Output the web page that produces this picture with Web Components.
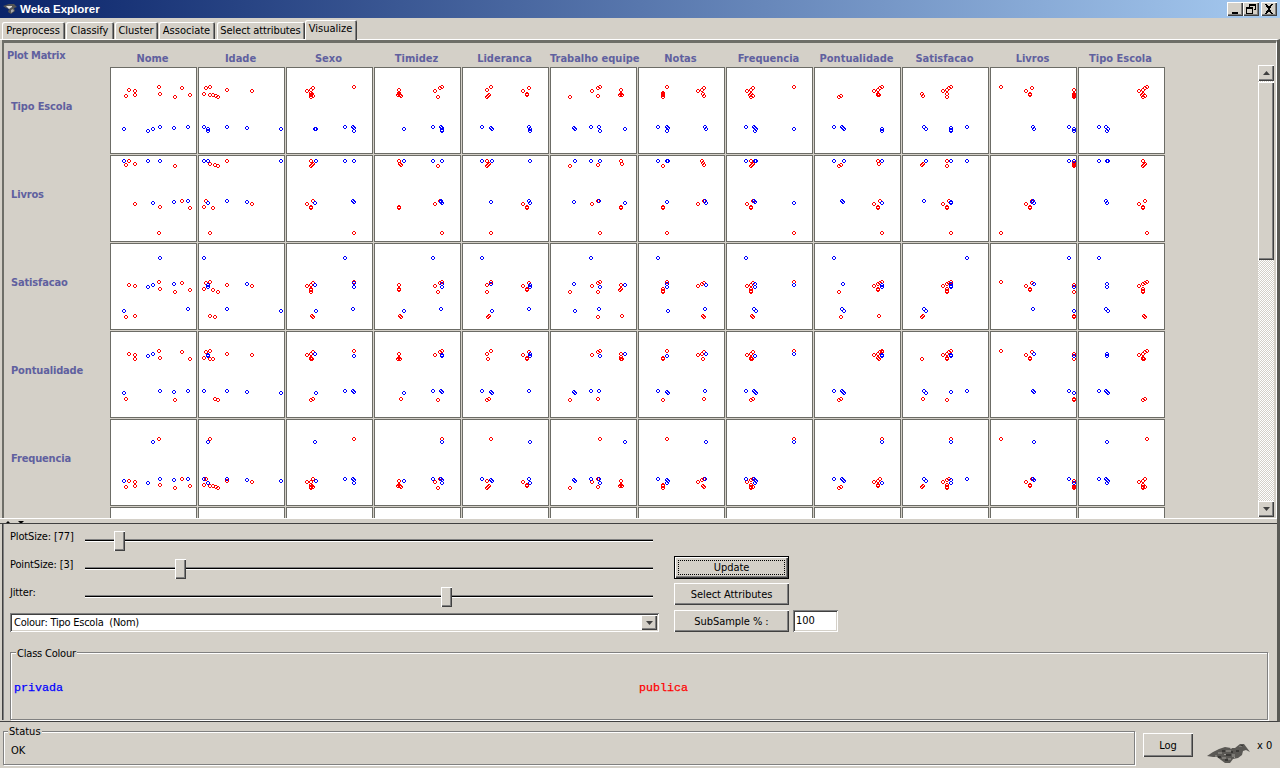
<!DOCTYPE html>
<html><head><meta charset="utf-8"><title>Weka Explorer</title>
<style>
html,body{margin:0;padding:0;background:#d4d0c8;overflow:hidden}
body{width:1280px;height:768px;font:11px "DejaVu Sans Condensed","Liberation Sans",Arial,sans-serif;color:#000}
</style></head>
<body>
<weka-explorer></weka-explorer>
<script>
const RAISED='box-shadow:inset 1px 1px 0 #fff,inset -1px -1px 0 #404040,inset -2px -2px 0 #808080;';
const SUNKEN='box-shadow:inset 1px 1px 0 #808080,inset -1px -1px 0 #fff,inset 2px 2px 0 #404040,inset -2px -2px 0 #d4d0c8;';
function def(name,css,html,init){
  customElements.define(name,class extends HTMLElement{
    constructor(){super();const r=this.attachShadow({mode:'open'});
      r.innerHTML='<style>'+css+'</style>'+(typeof html==='function'?html(this):html);}
    connectedCallback(){if(init&&!this._i){this._i=1;init(this,this.shadowRoot);}}
  });
}
const DATA=`0 0|62,78 80,81 80,93 53,96 151,69 154,90 198,99 219,72 243,93|47,195 118,201 133,195 154,189 195,192 237,189
0 1|290,72 302,69 284,90 302,93 311,93 318,96 325,99 352,78 426,81|284,189 296,195 296,201 352,189 411,192 512,195
0 2|606,72 600,78 589,81 600,87 603,90 600,93 606,96 600,99 728,69|612,195 615,195 701,189 725,189 728,192 728,201
0 3|861,78 861,87 858,93 864,93 867,96 861,90 965,81 982,72 988,69 976,99|876,195 961,189 985,189 988,192 988,198 988,201
0 4|1121,78 1133,69 1127,93 1124,96 1121,99 1225,81 1243,72 1237,90 1237,93|1106,189 1133,192 1136,195 1245,189 1248,195 1248,201
0 5|1364,99 1429,81 1447,96 1447,72 1453,69 1515,78 1515,90 1518,93 1513,93|1376,192 1379,195 1426,189 1450,189 1453,201 1526,195
1 0|62,291 53,303 80,300 198,306 80,420 154,429 219,411 243,432 151,507|47,291 118,291 154,291 133,417 195,414 237,411
1 1|302,300 317,303 325,306 352,291 290,411 284,429 311,432 426,420 302,507|284,291 296,291 512,291 296,417 352,411 411,414
1 2|600,291 606,300 603,303 600,306 606,411 589,420 600,429 600,432 728,507|615,291 701,291 728,291 612,417 725,411 728,414
1 3|861,291 864,300 867,303 861,432 861,429 976,306 965,420 982,411 988,507|876,291 961,291 988,291 985,411 988,417 985,413
1 4|1121,291 1127,300 1124,303 1121,306 1225,420 1237,429 1237,432 1243,411 1133,507|1106,291 1136,291 1248,291 1133,414 1245,411 1248,417
1 5|1515,291 1518,300 1364,306 1447,303 1429,420 1447,411 1515,429 1515,432 1453,507|1379,291 1426,291 1453,291 1376,414 1450,411 1526,417
2 0|62,663 80,666 151,654 154,675 198,684 219,657 243,678 53,759 80,756|154,582 118,669 133,663 195,660 47,741 237,735
2 1|290,657 302,654 284,675 311,678 325,684 352,663 426,666 302,756 317,759|284,582 296,663 296,669 411,660 352,735 512,741
2 2|606,657 600,663 589,666 600,675 600,678 600,684 728,654 603,756 606,759|701,582 612,663 728,657 728,669 615,741 725,735
2 3|861,663 861,675 861,678 965,666 982,657 988,654 976,684 864,756 867,759|961,582 988,660 988,669 876,741 985,735
2 4|1121,663 1133,654 1121,684 1225,666 1243,657 1237,675 1237,678 1124,759 1127,756|1106,582 1133,660 1248,663 1248,669 1136,741 1245,735
2 5|1429,666 1447,657 1453,654 1447,684 1364,684 1515,663 1515,675 1513,678 1518,756 1447,759|1426,582 1376,660 1453,669 1526,663 1379,741 1450,735
0 6|92,69 80,87 80,90 80,93 80,99 183,81 195,78 201,72 198,90 201,96|65,189 92,189 95,192 92,201 204,189 207,195
0 7|346,72 340,78 328,81 340,90 340,99 346,96 337,93 467,69|325,189 349,189 352,192 355,195 352,201 467,195
0 8|606,96 600,99 704,81 716,78 722,72 728,69 716,90 719,93 716,93|586,189 609,189 612,192 615,195 728,195 728,201
0 9|846,90 849,96 908,81 920,78 926,72 932,69 920,90 920,99|852,189 858,195 932,192 932,198 932,201 979,189
0 10|1077,69 1151,81 1169,72 1163,90 1163,93 1293,78 1293,90 1293,93 1293,96 1293,99|1172,189 1175,195 1278,189 1293,195 1293,201
0 11|1509,69 1503,72 1497,78 1485,81 1497,90 1497,99 1503,96 1494,93|1367,189 1390,189 1396,195 1393,201
1 6|80,306 195,291 198,297 201,303 183,420 201,411 80,429 80,432 92,507|65,291 92,291 95,291 92,414 204,411 207,417
1 7|340,291 346,300 343,303 340,306 328,420 340,429 340,432 346,411 467,507|325,291 352,291 355,291 349,411 352,414 467,417
1 8|606,303 600,306 716,291 719,300 704,420 722,411 716,429 716,432 728,507|586,291 615,291 728,291 609,411 612,414 728,417
1 9|846,303 849,300 920,291 920,306 908,420 926,411 920,429 920,432 932,507|858,291 932,291 979,291 852,411 932,414 932,417
1 10|1293,297 1293,300 1293,303 1293,306 1151,420 1169,411 1163,429 1163,432 1077,507|1278,291 1293,291 1172,411 1175,417 1169,413
1 11|1497,291 1503,300 1500,303 1497,306 1485,420 1503,411 1497,429 1497,432 1509,507|1367,291 1393,291 1396,291 1390,411 1393,417
2 6|92,654 80,675 80,681 80,684 183,666 195,660 201,657 198,756 201,759|65,582 92,660 92,669 207,663 95,741 204,735
2 7|346,657 340,663 328,666 340,675 340,681 340,684 467,654 343,756 346,759|325,582 352,660 352,669 467,663 349,735 355,741
2 8|728,654 722,657 716,660 704,666 716,675 716,678 600,684 606,759 719,756|586,582 612,660 728,663 728,669 609,735 615,741
2 9|908,666 920,660 926,657 932,654 920,675 920,681 920,684 849,756 846,759|979,582 932,660 932,666 932,669 852,735 858,741
2 10|1077,654 1151,666 1169,657 1163,675 1163,678 1293,663 1293,684 1293,756 1293,759|1278,582 1175,660 1293,669 1172,735 1293,741
2 11|1509,654 1503,657 1497,660 1485,666 1497,675 1497,681 1497,684 1500,756 1503,759|1367,582 1393,660 1393,669 1390,735 1396,741
3 0|62,78 80,81 80,93 151,69 154,90 219,72 243,93 53,213 198,216|118,84 133,78 47,195 154,189 195,192 237,189
3 1|290,72 302,69 284,90 302,93 311,93 352,78 426,81 317,213 325,216|296,81 296,84 284,189 352,189 411,192 512,195
3 2|606,72 600,78 589,81 600,90 603,93 600,93 728,69 606,213 600,216|612,78 728,84 615,195 701,189 725,189 728,192
3 3|861,78 861,90 858,93 864,93 965,81 982,72 988,69 867,213 976,216|988,81 988,84 876,195 961,189 985,189 988,192
3 4|1121,78 1133,69 1124,93 1225,81 1243,72 1237,90 1237,93 1127,213 1121,216|1248,78 1248,84 1106,189 1133,192 1136,195 1245,189
3 5|1429,81 1447,72 1453,69 1515,78 1515,87 1515,93 1518,93 1364,216 1447,213|1453,84 1526,78 1376,192 1379,195 1426,189 1450,189
4 0|151,333 62,459 80,462 80,474 53,477 154,471 198,480 219,453 243,474|133,342 47,459 118,465 154,453 195,456 237,453
4 1|302,333 290,453 284,471 302,474 311,474 318,477 325,480 352,459 426,462|296,342 284,453 296,465 352,453 411,456 512,459
4 2|728,333 606,453 600,462 589,462 600,471 603,474 606,477 600,481 600,477|612,342 615,459 701,453 725,453 728,456 728,465
4 3|988,333 861,459 861,471 858,474 864,474 867,477 965,462 982,453 976,480|988,342 876,459 961,453 985,453 988,456 988,465
4 4|1133,333 1121,459 1127,474 1124,477 1121,480 1225,462 1243,453 1237,471 1237,474|1248,342 1106,453 1133,456 1136,459 1245,453 1248,465
4 5|1453,333 1429,462 1447,453 1447,477 1364,480 1515,459 1515,471 1518,474 1513,474|1526,342 1376,456 1379,459 1426,453 1450,453 1453,465
3 6|92,69 80,90 80,93 183,81 195,78 201,72 198,93 80,216 201,213|92,84 207,78 65,189 92,192 95,195 204,189
3 7|346,72 340,78 328,81 340,90 343,93 340,93 467,69 346,213 340,216|352,84 467,78 325,189 349,189 352,192 355,195
3 8|728,69 722,72 716,78 704,81 716,90 719,93 606,213 600,216 728,72|728,81 728,84 586,189 609,189 612,192 615,195
3 9|846,93 908,81 920,78 926,72 932,69 920,90 920,93 849,213 920,216|932,81 932,84 852,189 858,195 932,192 979,189
3 10|1077,69 1151,81 1169,72 1163,90 1163,93 1293,78 1293,93 1293,213 1293,216|1175,78 1293,84 1172,189 1175,192 1278,189 1293,195
3 11|1509,69 1503,72 1497,78 1485,81 1497,90 1500,93 1497,93 1503,213 1497,216|1393,78 1393,84 1367,189 1390,189 1393,192 1396,195
4 6|92,333 80,471 80,474 80,480 183,462 195,456 201,453 198,474 201,477|207,342 65,453 92,456 95,459 92,465 204,453
4 7|467,333 346,453 340,456 328,462 340,471 340,477 346,477 340,480|467,342 325,453 349,453 352,456 355,459 352,465
4 8|728,333 722,453 716,459 704,462 716,471 716,474 606,477 600,480|728,342 586,453 609,453 612,456 615,459 728,465
4 9|932,333 926,453 920,456 908,462 920,471 920,477 920,480 849,474 846,477|932,342 852,453 858,459 932,456 932,465 979,453
4 10|1077,333 1169,453 1151,462 1163,471 1163,474 1293,459 1293,474 1293,477 1293,480|1175,342 1172,453 1175,456 1278,453 1293,465
4 11|1509,333 1503,453 1497,459 1485,462 1497,471 1497,477 1503,477 1497,480|1393,342 1367,453 1390,453 1393,456 1396,459 1393,465`;

const PLOTS={};
DATA.split('\n').forEach(l=>{const [k,a,b]=l.split('|');PLOTS[k]=[a,b];});
function ringPath(list,r,c){
  const cx=c<6?108:636,cy=r<3?64:328,ox=110+88*c+1,oy=67+88*r+1;
  return (list||'').split(' ').filter(Boolean).map(p=>{
    const [zx,zy]=p.split(',').map(Number);
    const x=Math.round(cx+zx/2.9545-2-ox),y=Math.round(cy+zy/3-2-oy);
    return `M${x+1} ${y}h2v1h-2zM${x} ${y+1}h1v2h-1zM${x+3} ${y+1}h1v2h-1zM${x+1} ${y+3}h2v1h-2z`;
  }).join('');
}

def('plot-cell',
 `:host{display:block;width:87px;height:87px;box-sizing:border-box;border:1px solid #6c6c66;background:#fff}
  svg{display:block;overflow:visible}`,
 el=>{const r=+el.getAttribute('r'),c=+el.getAttribute('c'),d=PLOTS[r+' '+c]||['',''];
  return `<svg width="85" height="85" shape-rendering="crispEdges"><path fill="#f00" d="${ringPath(d[0],r,c)}"/><path fill="#00f" d="${ringPath(d[1],r,c)}"/></svg>`;});

const COLS=['Nome','Idade','Sexo','Timidez','Lideranca','Trabalho equipe','Notas','Frequencia','Pontualidade','Satisfacao','Livros','Tipo Escola'];
const ROWS=['Tipo Escola','Livros','Satisfacao','Pontualidade','Frequencia',''];
def('plot-matrix',
 `:host{display:block;flex:1;min-width:0;overflow:hidden;font:bold 11px "DejaVu Sans Condensed","Liberation Sans",Arial,sans-serif;color:#60609f}
  .g{display:grid;grid-template-columns:105px repeat(12,87px);grid-template-rows:23px repeat(6,87px);gap:1px}
  .corner{padding:6px 0 0 3px;line-height:13px;white-space:nowrap;letter-spacing:-.3px}
  .h{text-align:center;padding:9px 2px 0 0;line-height:13px;white-space:nowrap}
  .r{padding:33px 0 0 7px;line-height:13px;letter-spacing:-.15px}`,
 ()=>{let h='<div class="g"><div class="corner">Plot Matrix</div>';
  COLS.forEach(c=>h+=`<div class="h">${c}</div>`);
  ROWS.forEach((l,r)=>{h+=`<div class="r">${l}</div>`;COLS.forEach((_,c)=>h+=`<plot-cell r="${r}" c="${c}"></plot-cell>`);});
  return h+'</div>';});

def('win-scrollbar',
 `:host{display:flex;flex-direction:column;width:16px;margin:22px 2px 1px 0;background:repeating-conic-gradient(#fff 0 25%,#d4d0c8 0 50%) 0 0/2px 2px}
  .b{height:16px;background:#d4d0c8;${RAISED}display:flex;align-items:center;justify-content:center;flex:none}
  .t{height:178px;background:#d4d0c8;${RAISED}margin-top:1px;flex:none}
  .s{flex:1}`,
 `<div class="b"><svg width="7" height="4"><path d="M3.5 0L7 4H0z" fill="#404040"/></svg></div><div class="t"></div><div class="s"></div>
  <div class="b"><svg width="7" height="4"><path d="M0 0H7L3.5 4z" fill="#404040"/></svg></div>`);

def('plot-slider',
 `:host{display:flex;height:20px;position:relative}
  .l{width:75px;flex:none;line-height:12px;white-space:nowrap;letter-spacing:-.15px}
  .tr{flex:none;width:568px;position:relative}
  .tr::before{content:"";position:absolute;left:0;right:0;top:8px;height:1px;background:#808080}
  .tr::after{content:"";position:absolute;left:0;right:0;top:9px;height:2px;background:linear-gradient(#000 50%,#fff 50%)}
  .th{position:absolute;top:0;width:11px;height:20px;background:#d4d0c8;z-index:1;${RAISED}}`,
 el=>`<div class="l"><slot></slot></div><div class="tr"><div class="th" style="left:${el.getAttribute('pos')}px"></div></div>`);

def('win-button',
 `:host{display:flex;align-items:center;justify-content:center;box-sizing:border-box;width:115px;height:22px;background:#d4d0c8;${RAISED}white-space:nowrap;font-size:11px;letter-spacing:-.05px}
  :host([default]){height:23px;box-shadow:inset 0 0 0 1px #000,inset 2px 2px 0 #fff,inset -2px -2px 0 #404040,inset -3px -3px 0 #808080}
  :host([default]) span{display:flex;align-items:center;justify-content:center;width:105px;height:13px;outline:1px dotted #000;padding-bottom:1px;box-sizing:border-box}`,
 `<span><slot></slot></span>`);

def('class-combo',
 `:host{display:flex;box-sizing:border-box;width:649px;height:19px;background:#fff;${SUNKEN}padding:2px;align-items:stretch;margin-top:6px}
  .v{flex:1;line-height:15px;padding-left:2px;white-space:pre;letter-spacing:-.24px}
  .a{width:16px;background:#d4d0c8;${RAISED}display:flex;align-items:center;justify-content:center}`,
 `<div class="v"><slot></slot></div><div class="a"><svg width="7" height="4"><path d="M0 0H7L3.5 4z" fill="#404040"/></svg></div>`);

def('text-box',
 `:host{display:block;box-sizing:border-box;width:45px;height:22px;background:#fff;${SUNKEN}padding:0 3px;line-height:22px;font-size:11px}`,
 `<slot></slot>`);

def('group-box',
 `:host{display:block;box-sizing:border-box;position:relative;border:1px solid #808080;box-shadow:inset 1px 1px 0 #fff,1px 1px 0 #fff}
  .lg{position:absolute;left:var(--lg,5px);top:var(--lt,-5px);padding:0 1px;background:#d4d0c8;line-height:12px;white-space:nowrap;letter-spacing:var(--ls,-.2px)}`,
 el=>`<div class="lg">${el.getAttribute('label')}</div><slot></slot>`);

def('win-caption-btn',
 `:host{display:flex;width:16px;height:14px;background:#d4d0c8;${RAISED}align-items:center;justify-content:center}`,
 el=>{const k=el.getAttribute('kind');
  const g={min:'<path d="M2 8h6v2H2z"/>',
   max:'<path fill-rule="evenodd" d="M3 0h7v6H8V5h1V2H4v1H3zM0 3h7v7H0zM1 5v4h5V5z"/>',
   close:'<path d="M1 0h2l2 3 2-3h2L6 5l3 5H7L5 7l-2 3H1l3-5z"/>'}[k];
  return `<svg width="10" height="10" shape-rendering="crispEdges">${g}</svg>`;});

def('win-titlebar',
 `:host{display:flex;align-items:center;height:18px;flex:none;background:linear-gradient(90deg,#0a246a,#a6caf0);color:#fff;font:bold 11.5px "Liberation Sans",Arial,sans-serif;padding-left:3px}
  svg{margin-right:2px;flex:none}
  .s{flex:1}
  .b{display:flex;margin-right:3px}
  win-caption-btn:last-child{margin-left:2px}`,
 `<svg width="15" height="11" viewBox="0 0 15 11"><path d="M0 2L6 0l5 0 3 3-3 1 1 3-4 3-3-2 1-3-3-1z" fill="#555"/><path d="M3 2h6v1l-3 2z" fill="#ddd"/><path d="M8 6l2-1 1 2-3 2z" fill="#aaa"/></svg>
  <span>Weka Explorer</span><span class="s"></span>
  <span class="b"><win-caption-btn kind="min"></win-caption-btn><win-caption-btn kind="max"></win-caption-btn><win-caption-btn kind="close"></win-caption-btn></span>`);

def('tab-item',
 `:host{display:flex;align-items:center;justify-content:center;box-sizing:border-box;height:17px;background:#d4d0c8;border-radius:2px 2px 0 0;box-shadow:inset 1px 1px 0 #fff,inset -1px 0 0 #404040,inset -2px 0 0 #808080;white-space:nowrap;padding-right:1px}
  :host([selected]){height:20px;margin-bottom:-1px;padding-bottom:3px;position:relative}`,
 `<slot></slot>`);

def('weka-bird',
 `:host{display:block;width:44px;height:21px;flex:none}`,
 `<svg width="44" height="21" viewBox="0 0 44 21"><path d="M1 14L7 10l6-3 6-2 6 1 4 0 5-4 4 0 3 4 3 4-4-2-3 1-1 4-4 3-5 1-3 4-5 0-4-3-4-3-4 0z" fill="#5a5854"/>
  <g shape-rendering="crispEdges"><path fill="#7d7b76" d="M12 10h4v2h-4zM20 8h5v2h-5zM26 12h3v3h-3zM16 15h4v2h-4zM9 13h2v2H9zM33 4h3v1h-3zM22 16h3v2h-3z"/><path fill="#3a3936" d="M16 8h3v2h-3zM20 12h5v2h-5zM12 14h3v2h-3zM30 8h3v2h-3zM25 9h2v2h-2zM19 17h3v2h-3zM35 3h2v1h-2z"/><path fill="#9a9893" d="M18 12h2v1h-2zM24 6h2v1h-2zM28 15h1v1h-1z"/></g></svg>`);

def('matrix-pane',
 `:host{display:flex;height:478px;box-sizing:border-box;margin-left:2px;border-top:3px solid #6e6e68;border-left:2px solid #6e6e68;border-right:1px solid #fff;overflow:hidden}`,
 `<slot></slot>`);

def('split-bar',
 `:host{display:flex;box-sizing:border-box;height:6px;border-top:1px solid #fff;border-bottom:1px solid #404040;padding:2px 0 0 5px;gap:7px;overflow:hidden}
  svg{display:block}`,
 `<svg width="6" height="3"><path d="M3 0L6 3H0z" fill="#000"/></svg><svg width="6" height="3"><path d="M0 0H6L3 3z" fill="#000"/></svg>`);

def('control-panel',
 `:host{display:block;margin-left:2px;border-left:1px solid #404040;box-shadow:inset 1px 0 0 #808080;padding:7px 0 0 7px;height:196px;box-sizing:border-box}
  .top{display:flex;height:101px}
  .left{width:649px;flex:none}
  .sl{display:flex;flex-direction:column;gap:8px}
  .right{margin-left:15px;padding-top:25px;display:flex;flex-direction:column;width:165px}
  .sub{display:flex;gap:4px;margin-top:5px}
  win-button.sa{margin-top:4px}
  .cc{margin-top:20px;width:1258px;height:68px;display:block}
  .leg{display:grid;grid-template-columns:625px 1fr;padding:3px 3px 0;height:66px;align-items:center;box-sizing:border-box}
  .leg div{font:11.67px "Liberation Mono","Courier New",monospace;-webkit-text-stroke:.25px currentColor}`,
 `<div class="top"><div class="left"><div class="sl">
    <plot-slider pos="29">PlotSize: [77]</plot-slider>
    <plot-slider pos="90">PointSize: [3]</plot-slider>
    <plot-slider pos="356">Jitter:</plot-slider></div>
    <class-combo>Colour: Tipo Escola  (Nom)</class-combo></div>
   <div class="right"><win-button default>Update</win-button><win-button class="sa">Select Attributes</win-button>
    <div class="sub"><win-button>SubSample % :</win-button><text-box>100</text-box></div></div></div>
  <group-box class="cc" label="Class Colour"><div class="leg"><div style="color:#00f">privada</div><div style="color:#f00">publica</div></div></group-box>`);

def('status-bar',
 `:host{display:flex;height:46px;box-sizing:border-box;padding:9px 0 0 3px;flex:none}
  group-box{width:1132px;height:34px;--lg:4px;--lt:-6px;--ls:0;flex:none}
  .ok{padding:12px 0 0 7px;line-height:13px}
  win-button{width:50px;height:24px;margin:2px 0 0 8px}
  weka-bird{margin:11px 0 0 13px}
  .x{margin:9px 0 0 7px;line-height:12px;white-space:nowrap}`,
 `<group-box label="Status"><div class="ok">OK</div></group-box><win-button>Log</win-button><weka-bird></weka-bird><div class="x">x 0</div>`);

def('weka-explorer',
 `:host{display:flex;flex-direction:column;width:1280px;height:768px;overflow:hidden}
  .tabs{display:flex;height:21px;align-items:flex-end;padding-left:2px;flex:none;position:relative;z-index:1}
  .body{height:683px;box-sizing:border-box;border-top:1px solid #fff;border-right:3px solid #5a5a55;border-bottom:1px solid #404040;flex:none}`,
 `<win-titlebar></win-titlebar>
  <div class="tabs">
   <tab-item style="width:63px">Preprocess</tab-item>
   <tab-item style="width:48px;margin-left:1px">Classify</tab-item>
   <tab-item style="width:43px;margin-left:1px">Cluster</tab-item>
   <tab-item style="width:56px;margin-left:1px">Associate</tab-item>
   <tab-item style="width:88px;margin-left:2px;letter-spacing:-.1px">Select attributes</tab-item>
   <tab-item style="width:52px" selected>Visualize</tab-item>
  </div>
  <div class="body">
   <matrix-pane><plot-matrix></plot-matrix><win-scrollbar></win-scrollbar></matrix-pane>
   <split-bar></split-bar>
   <control-panel></control-panel>
  </div>
  <status-bar></status-bar>`);
</script>
</body></html>
